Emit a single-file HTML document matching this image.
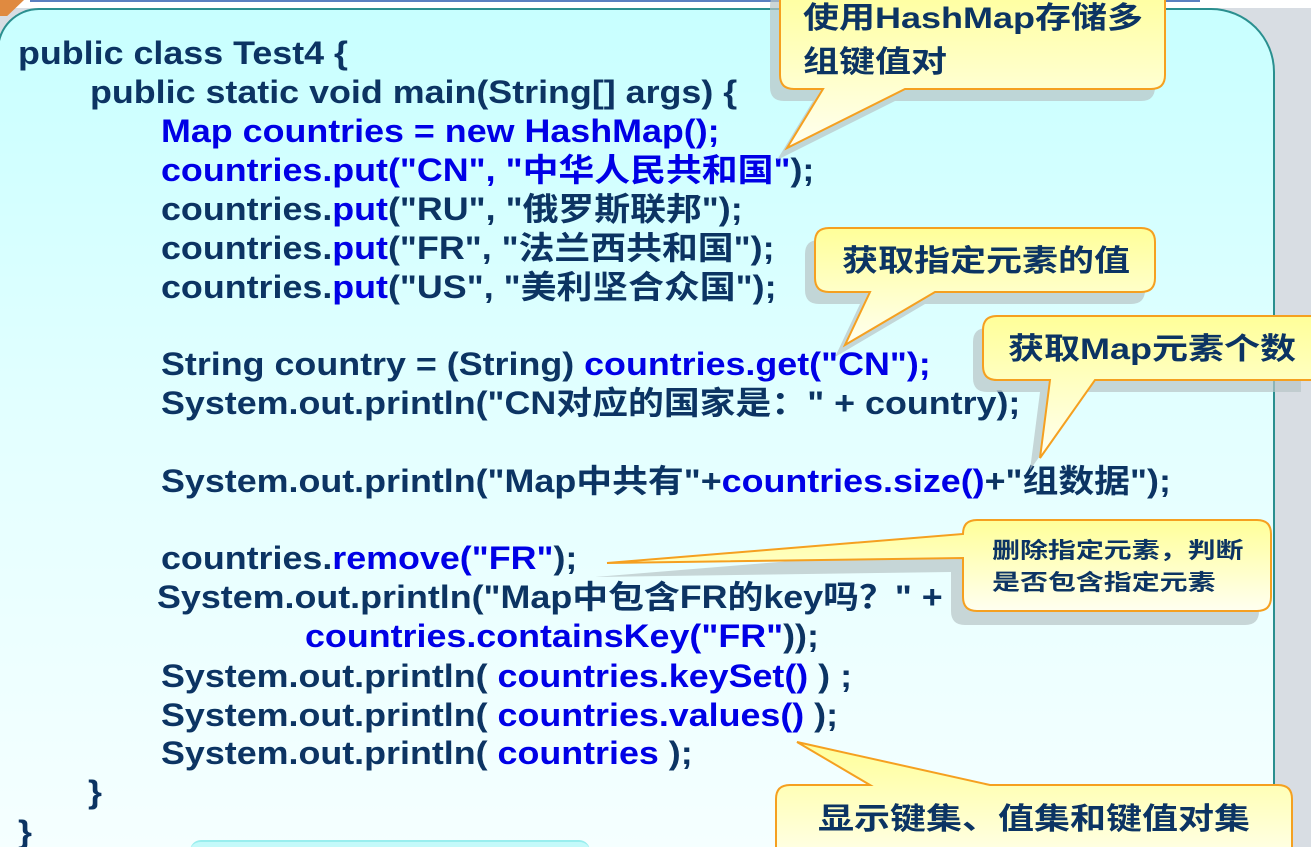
<!DOCTYPE html>
<html><head><meta charset="utf-8"><style>
html,body{margin:0;padding:0;overflow:hidden;width:1311px;height:847px}
body{position:relative;background:#d8dde3;font-family:"Liberation Sans","Noto Sans CJK SC",sans-serif;}
.panel{position:absolute;left:-3px;top:8px;width:1274px;height:860px;border:2px solid #2a8f8f;border-bottom:none;border-radius:42px 64px 0 0;background:linear-gradient(#c8ffff 0%,#e4ffff 50%,#f6ffff 100%);}
.l{position:absolute;white-space:pre;font-weight:bold;font-size:32px;line-height:38px;color:#0c3463;transform:scaleX(1.12);transform-origin:0 0;}
.b{color:#0000e6}
.c{position:absolute;font-weight:bold;color:#0c3463;white-space:pre;transform:scaleX(1.2);transform-origin:0 0;}
</style></head><body>
<div style="position:absolute;left:0;top:0;width:1311px;height:8px;background:#fff"></div>
<div style="position:absolute;left:30px;top:0;width:1170px;height:2px;background:#5a7fc0"></div>
<div style="position:absolute;left:0;top:0;width:24px;height:16px;background:#e08a40;clip-path:polygon(0 0,100% 0,30% 100%,0 100%)"></div>
<div class="panel"></div>
<div style="position:absolute;left:190px;top:840px;width:400px;height:20px;border-radius:14px;background:#c4fafa;border-top:2px solid #9ee"></div>

<div class="l" style="left:18px;top:34px">public class Test4 {</div>
<div class="l" style="left:90px;top:73px">public static void main(String[] args) {</div>
<div class="l b" style="left:161px;top:112px">Map countries = new HashMap();</div>
<div class="l" style="left:161px;top:151px"><span class="b">countries.put("CN", "中华人民共和国"</span>);</div>
<div class="l" style="left:161px;top:190px">countries.<span class="b">put</span>("RU", "俄罗斯联邦");</div>
<div class="l" style="left:161px;top:229px">countries.<span class="b">put</span>("FR", "法兰西共和国");</div>
<div class="l" style="left:161px;top:268px">countries.<span class="b">put</span>("US", "美利坚合众国");</div>
<div class="l" style="left:161px;top:345px">String country = (String) <span class="b">countries.get("CN");</span></div>
<div class="l" style="left:161px;top:384px">System.out.println("CN对应的国家是：" + country);</div>
<div class="l" style="left:161px;top:462px">System.out.println("Map中共有"+<span class="b">countries.size()</span>+"组数据");</div>
<div class="l" style="left:161px;top:539px">countries.<span class="b">remove("FR"</span>);</div>
<div class="l" style="left:157px;top:578px">System.out.println("Map中包含FR的key吗？" +</div>
<div class="l b" style="left:305px;top:617px">countries.containsKey("FR"<span style="color:#0c3463">));</span></div>
<div class="l" style="left:161px;top:657px">System.out.println( <span class="b">countries.keySet()</span> ) ;</div>
<div class="l" style="left:161px;top:696px">System.out.println( <span class="b">countries.values()</span> );</div>
<div class="l" style="left:161px;top:734px">System.out.println( <span class="b">countries</span> );</div>
<div class="l" style="left:88px;top:773px">}</div>
<div class="l" style="left:18px;top:813px">}</div>

<svg width="1311" height="847" style="position:absolute;left:0;top:0">
<defs><linearGradient id="g" x1="0" y1="0" x2="0" y2="1"><stop offset="0" stop-color="#ffff99"/><stop offset="1" stop-color="#fffff0"/></linearGradient></defs>
<g fill="#b8c4c6" opacity="0.7">
<path transform="translate(-10,12)" d="M794,-20 H1151 Q1165,-20 1165,-6 V75 Q1165,89 1151,89 H905 L787,148 L823,89 H794 Q780,89 780,75 V-6 Q780,-20 794,-20 Z"/>
<path transform="translate(-10,12)" d="M829,228 H1141 Q1155,228 1155,242 V278 Q1155,292 1141,292 H935 L845,345 L870,292 H829 Q815,292 815,278 V242 Q815,228 829,228 Z"/>
<path transform="translate(-10,12)" d="M997,316 H1311 V380 H1095 L1040,458 L1050,380 H997 Q983,380 983,366 V330 Q983,316 997,316 Z"/>
<path transform="translate(-12,14)" d="M977,520 H1257 Q1271,520 1271,534 V597 Q1271,611 1257,611 H977 Q963,611 963,597 V558 L607,563 L963,534 Q963,520 977,520 Z"/>
</g>
<g fill="url(#g)" stroke="#f5a020" stroke-width="2">
<path d="M794,-20 H1151 Q1165,-20 1165,-6 V75 Q1165,89 1151,89 H905 L787,148 L823,89 H794 Q780,89 780,75 V-6 Q780,-20 794,-20 Z"/>
<path d="M829,228 H1141 Q1155,228 1155,242 V278 Q1155,292 1141,292 H935 L845,345 L870,292 H829 Q815,292 815,278 V242 Q815,228 829,228 Z"/>
<path d="M997,316 H1320 V380 H1095 L1040,458 L1050,380 H997 Q983,380 983,366 V330 Q983,316 997,316 Z"/>
<path d="M977,520 H1257 Q1271,520 1271,534 V597 Q1271,611 1257,611 H977 Q963,611 963,597 V558 L607,563 L963,534 Q963,520 977,520 Z"/>
<path d="M790,785 H870 L797,742 L990,785 H1278 Q1292,785 1292,799 V870 H776 V799 Q776,785 790,785 Z"/>
</g>
</svg>
<div class="c" style="left:803px;top:-3px;font-size:30px;line-height:44px">使用HashMap存储多
组键值对</div>
<div class="c" style="left:842px;top:242px;font-size:30px;line-height:40px">获取指定元素的值</div>
<div class="c" style="left:1008px;top:330px;font-size:30px;line-height:40px">获取Map元素个数</div>
<div class="c" style="left:992px;top:535px;font-size:22px;line-height:32px;transform:scaleX(1.27)">删除指定元素，判断
是否包含指定元素</div>
<div class="c" style="left:818px;top:800px;font-size:30px;line-height:40px">显示键集、值集和键值对集</div>
</body></html>
